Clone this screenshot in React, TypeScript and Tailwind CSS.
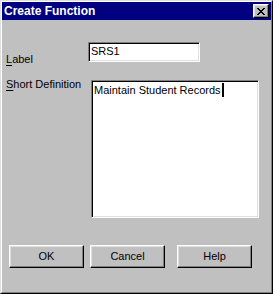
import React from 'react'

const font = { fontFamily: '"Liberation Sans", Arial, sans-serif' }

function CloseGlyph() {
  // 8x7 pixel X
  const px: [number, number][] = [
    [0, 0], [1, 0], [6, 0], [7, 0],
    [1, 1], [2, 1], [5, 1], [6, 1],
    [2, 2], [3, 2], [4, 2], [5, 2],
    [3, 3], [4, 3],
    [2, 4], [3, 4], [4, 4], [5, 4],
    [1, 5], [2, 5], [5, 5], [6, 5],
    [0, 6], [1, 6], [6, 6], [7, 6],
  ]
  return (
    <svg width="8" height="7" viewBox="0 0 8 7" shapeRendering="crispEdges">
      {px.map(([x, y]) => (
        <rect key={`${x}-${y}`} x={x} y={y} width="1" height="1" fill="#000" />
      ))}
    </svg>
  )
}

function Button({ children }: { children: React.ReactNode }) {
  return (
    <div className="w-[75px] h-[23px] flex items-center justify-center bg-[#c0c0c0] border border-t-white border-l-white border-b-black border-r-black shadow-[inset_-1px_-1px_#808080,inset_1px_1px_#dfdfdf] text-[11px] leading-[13px] text-black">
      {children}
    </div>
  )
}

export default function App() {
  return (
    <div className="w-[273px] h-[294px] bg-[#c0c0c0]" style={font}>
      <div className="w-full h-full border border-t-[#dfdfdf] border-l-[#dfdfdf] border-b-black border-r-black">
        <div className="w-full h-full flex flex-col border border-t-white border-l-white border-b-[#808080] border-r-[#808080]">
          {/* Title bar */}
          <div className="h-[18px] bg-[#000080] flex items-center justify-between pl-[2px] pr-[2px]">
            <span className="text-white font-bold text-[12px] leading-[18px]">Create Function</span>
            <div className="w-[16px] h-[14px] flex items-center justify-center bg-[#c0c0c0] border border-t-white border-l-white border-b-black border-r-black shadow-[inset_-1px_-1px_#808080,inset_1px_1px_#dfdfdf]">
              <CloseGlyph />
            </div>
          </div>

          <div className="flex flex-col pl-[4px] text-[11px] leading-[13px] text-black">
            {/* Label row */}
            <div className="flex items-start mt-[22px] h-[20px]">
              <div className="w-[82px] mt-[11px]">
                <span className="underline underline-offset-2">L</span>abel
              </div>
              <div className="w-[112px] h-[20px] bg-white border border-t-[#808080] border-l-[#808080] border-b-white border-r-white shadow-[inset_1px_1px_#000,inset_-1px_-1px_#dfdfdf] pl-[2px] pt-[2px]">
                SRS1
              </div>
            </div>

            {/* Short definition row */}
            <div className="flex items-start mt-[16px]">
              <div className="w-[85px]">
                <span className="underline underline-offset-2">S</span>hort Definition
              </div>
              <div className="w-[168px] h-[138px] mt-[2px] bg-white border border-t-[#808080] border-l-[#808080] border-b-white border-r-white shadow-[inset_1px_1px_#000,inset_-1px_-1px_#dfdfdf] pl-[2px] pt-[2px]">
                <span className="inline-flex items-center">
                  Maintain Student Records
                  <span className="inline-block w-[2px] h-[14px] bg-black ml-[1px]" />
                </span>
              </div>
            </div>

            {/* Buttons */}
            <div className="flex mt-[27px] ml-[3px]">
              <Button>OK</Button>
              <div className="w-[6px]" />
              <Button>Cancel</Button>
              <div className="w-[12px]" />
              <Button>Help</Button>
            </div>
          </div>
        </div>
      </div>
    </div>
  )
}
